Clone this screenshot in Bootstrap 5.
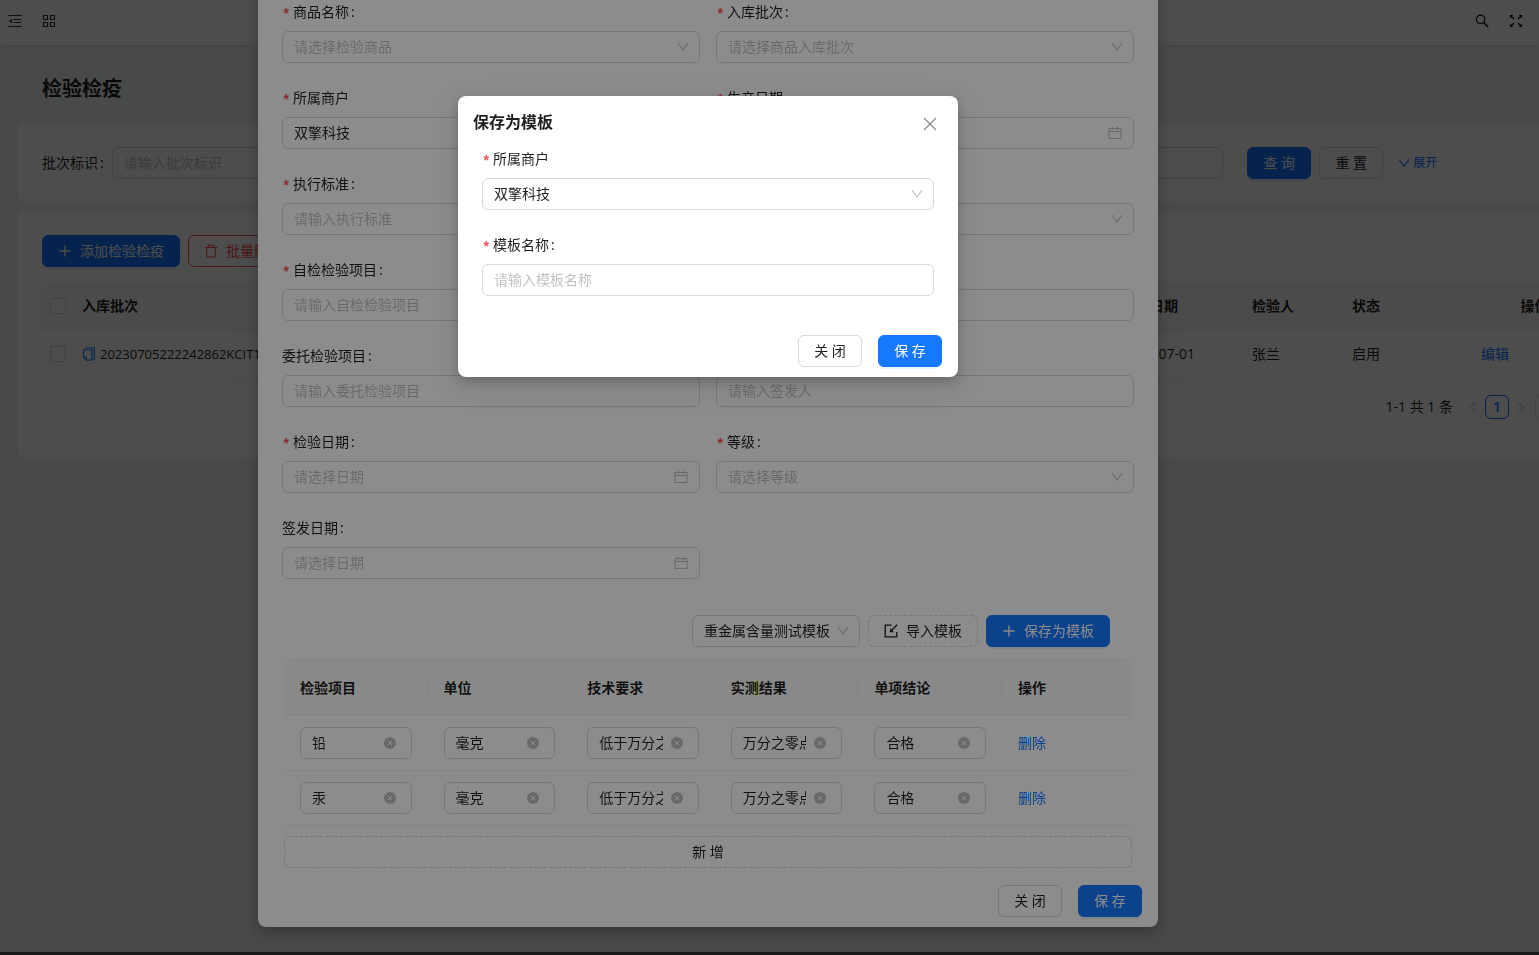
<!DOCTYPE html>
<html lang="zh-CN">
<head>
<meta charset="utf-8">
<meta name="viewport" content="width=device-width, initial-scale=1">
<title>检验检疫</title>
<link rel="stylesheet" href="https://cdn.jsdelivr.net/npm/bootstrap@5.3.0/dist/css/bootstrap.min.css">
<style>
  :root { --line: #d9d9d9; --split: #f0f0f0; --brand: #1677ff; --danger: #ff4d4f; --ink: rgba(0,0,0,.88); --hint: rgba(0,0,0,.25); }
  html, body { height: 100%; overflow: hidden; }
  body { background: #f0f2f5; color: var(--ink); font: 14px/22px "Open Sans", "Noto Sans CJK SC", sans-serif; }
  a { color: var(--brand); text-decoration: none; }
  svg { display: block; flex: none; }

  /* controls */
  .form-control, .form-select { height: 32px; padding: 4px 11px; border: 1px solid var(--line); border-radius: 6px; font-size: 14px; line-height: 22px; color: var(--ink); background-color: #fff; }
  .form-control { padding-top: 3px; padding-bottom: 5px; }
  .form-control::placeholder { color: var(--hint); opacity: 1; }
  .form-select { padding-right: 28px; background-size: 12px 12px; background-position: right 10px center;
    background-image: url("data:image/svg+xml,%3Csvg xmlns='http://www.w3.org/2000/svg' viewBox='0 0 12 12'%3E%3Cpath d='M1.2 2.2L6 9l4.8-6.8' fill='none' stroke='%23bfbfbf' stroke-width='1.1'/%3E%3C/svg%3E"); }
  .form-select.unset { color: var(--hint); }
  .date-input { background: #fff url("data:image/svg+xml,%3Csvg xmlns='http://www.w3.org/2000/svg' viewBox='0 0 14 14'%3E%3Cpath d='M1 2.5h12v10H1zM1 5.5h12M4.5 .8v3M9.5 .8v3' fill='none' stroke='%23bfbfbf'/%3E%3C/svg%3E") no-repeat right 11px center / 14px 14px; }
  .clear-input { padding-right: 35px; background: #fff url("data:image/svg+xml,%3Csvg xmlns='http://www.w3.org/2000/svg' viewBox='0 0 12 12'%3E%3Ccircle cx='6' cy='6' r='6' fill='%23bfbfbf'/%3E%3Cpath d='M4 4l4 4M8 4l-4 4' stroke='%23fff'/%3E%3C/svg%3E") no-repeat right 15px center / 12px 12px; }
  .form-label { display: flex; height: 22px; margin: 0 0 8px; }
  .form-label.need::before { content: "*"; width: 11px; padding-top: 3px; color: var(--danger); font-family: "Liberation Mono", monospace; font-weight: 700; }
  .form-label.colon::after, .bar-label::after { content: ":"; margin-left: 2px; }
  .btn { display: inline-flex; align-items: center; justify-content: center; gap: 8px; height: 32px; min-width: 64px; padding: 4px 15px; border-radius: 6px; font-size: 14px; line-height: 22px; white-space: nowrap; }
  .btn-primary { background: var(--brand); border-color: var(--brand); box-shadow: 0 2px 0 rgba(5,145,255,.1); }
  .btn-plain { background: #fff; border-color: var(--line); color: var(--ink); }
  .btn-dashed { background: #fff; border: 1px dashed var(--line); color: var(--ink); }
  .btn-outline-danger { color: var(--danger); border-color: var(--danger); }
  .form-grid { display: grid; grid-template-columns: 1fr 1fr; column-gap: 16px; }
  .field { margin-bottom: 24px; }

  /* page behind the dialogs */
  .topbar { height: 45px; padding: 0 16px 3px 8px; background: #fff; box-shadow: 0 1px 4px rgba(0,21,41,.08); }
  .topbar nav { gap: 20px; }
  .topbar a { color: #333; }
  .topbar .tool-icons a { color: #000; }
  .wide { margin-right: -110px; padding-left: 18px; }
  .page-title { margin: 0; padding: 30px 24px 20px; font-size: 20px; line-height: 28px; font-weight: 600; }
  .panel { padding: 24px; margin-bottom: 8px; border-radius: 8px; background: #fff; }
  .grid-table { width: 100%; table-layout: fixed; border-collapse: separate; border-spacing: 0; }
  .grid-table th, .grid-table td { border-bottom: 1px solid var(--split); }
  .grid-table th { position: relative; background: #fafafa; font-weight: 600; }
  .grid-table th:first-child { border-top-left-radius: 8px; }
  .grid-table th:last-child { border-top-right-radius: 8px; }
  .grid-table th.split::after { content: ""; position: absolute; right: 0; top: 50%; height: 22px; margin-top: -11px; border-right: 1px solid var(--split); }
  .list-table th { padding: 12px 8px; }
  .list-table td { height: 49px; padding: 12px 8px; }
  .list-table .form-check-input { display: block; width: 16px; height: 16px; margin: 0; border: 1px solid var(--line); border-radius: 3px; }
  .col-check { width: 32px; }
  .col-date { width: 130px; }
  .col-short { width: 100px; }
  .col-ops { width: 181px; }
  .col-last { width: 130px; }
  .serial { font-size: 13px; }
  .ops { padding-left: 29px; gap: 16px; }
  .divide { width: 1px; height: 13px; background: var(--split); }
  .pager { margin: 16px 0; height: 24px; }
  .pager a { display: flex; align-items: center; justify-content: center; width: 24px; height: 24px; border-radius: 6px; }
  .pager .current { border: 1px solid var(--brand); font-weight: 600; }
  .pager .form-select { width: 90px; height: 24px; padding: 0 7px; margin-left: 2px; }
  .fold { font-size: 12px; gap: 3px; margin-left: 7px; }

  /* dialogs */
  .modal-backdrop.show { opacity: .45; }
  .modal { padding-right: 123px; overflow: hidden; }
  .modal-dialog { width: 100%; }
  .modal-content { border: 0; border-radius: 8px; color: var(--ink); box-shadow: 0 6px 16px rgba(0,0,0,.08), 0 3px 6px -4px rgba(0,0,0,.12), 0 9px 28px 8px rgba(0,0,0,.05), 0 4px 12px rgba(0,0,0,.15); }
  .modal-footer { padding: 10px 16px; gap: 16px; border: 0; }
  .modal-footer > * { margin: 0; }
  .sheet { padding-bottom: 28px; }
  .sheet .modal-dialog { max-width: 900px; margin: 0 auto; flex: none; }
  .sheet .modal-body { padding: 24px 24px 7px; }
  .tools { padding: 12px 24px 12px 0; border-bottom: 1px solid var(--split); }
  .tools .form-select { width: 168px; }
  .item-area { padding: 0 2px; }
  .item-area .btn { margin-top: 10px; }
  .item-table th { padding: 16px; height: 56px; }
  .item-table td { padding: 11px 16px; }
  .backdrop-top { z-index: 1060; }
  .prompt { z-index: 1065; }
  .prompt .modal-dialog { max-width: 500px; margin: 96px auto 0; }
  .prompt .modal-header { padding: 14px 21px 14px 15px; border: 0; }
  .prompt .modal-title { font-size: 16px; line-height: 24px; font-weight: 600; }
  .prompt .modal-body { padding: 0 24px; }
  .prompt .modal-footer { padding-top: 15px; }
  .x-close { padding: 4px 0 0; border: 0; background: none; color: rgba(0,0,0,.45); }
  .desk-edge { height: 3px; z-index: 1070; background: #1b1b1b; }
</style>
</head>
<body>
<header class="topbar d-flex align-items-center justify-content-between">
  <nav class="d-flex">
    <a href="#" aria-label="折叠菜单"><svg width="14" height="14" viewBox="0 0 14 14" fill="none" stroke="currentColor" stroke-width="1.2"><path d="M.5 1.500h13M5.500 5.500h8M5.500 8.500h8M.5 12.500h13"/><path d="M4 4.800v4.400L1 7z" fill="currentColor" stroke="none"/></svg></a>
    <a href="#" aria-label="应用"><svg width="14" height="14" viewBox="0 0 14 14" fill="none" stroke="currentColor" stroke-width="1.2"><path d="M1.500 1.500h4v4h-4zM8.500 1.500h4v4h-4zM1.500 8.500h4v4h-4zM8.500 8.500h4v4h-4z"/></svg></a>
  </nav>
  <nav class="tool-icons d-flex">
    <a href="#" aria-label="搜索"><svg width="14" height="14" viewBox="0 0 14 14" fill="none" stroke="currentColor" stroke-width="1.1"><circle cx="5.600" cy="5.300" r="4.200"/><path d="M8.700 8.400l4.500 4.500" stroke-width="1.400"/></svg></a>
    <a href="#" aria-label="全屏"><svg width="14" height="14" viewBox="0 0 14 14" fill="none" stroke="currentColor" stroke-width="1.1"><path d="M1.500 1.500L5 5M12.500 1.500L9 5M1.500 12.500L5 9M12.500 12.500L9 9"/><path d="M1 1h3.200L1 4.200zM13 1v3.200L9.800 1zM1 13V9.800L4.200 13zM13 13H9.800L13 9.800z" fill="currentColor" stroke="none"/></svg></a>
  </nav>
</header>

<main class="wide">
  <h1 class="page-title">检验检疫</h1>
  <section class="panel">
    <form class="row g-4">
      <div class="col-9 d-flex gap-4">
        <div class="d-flex align-items-center flex-fill gap-2">
          <label class="bar-label text-nowrap" for="batch">批次标识</label>
          <input id="batch" class="form-control" placeholder="请输入批次标识">
        </div>
        <div class="flex-fill"><input class="form-control" aria-label="查询条件"></div>
      </div>
      <div class="col-3 d-flex align-items-center gap-2">
        <button type="button" class="btn btn-primary">查 询</button>
        <button type="button" class="btn btn-plain">重 置</button>
        <a href="#" class="fold d-flex align-items-center"><svg width="12" height="12" viewBox="0 0 12 12" fill="none" stroke="currentColor" stroke-width="1.1"><path d="M1.2 2.600L6 9.200l4.800-6.600"/></svg>展开</a>
      </div>
    </form>
  </section>

  <section class="panel">
    <div class="d-flex gap-2 mb-3">
      <button type="button" class="btn btn-primary"><svg width="14" height="14" viewBox="0 0 14 14" stroke="currentColor" stroke-width="1.3"><path d="M7 1.500v11M1.500 7h11"/></svg>添加检验检疫</button>
      <button type="button" class="btn btn-outline-danger"><svg width="14" height="14" viewBox="0 0 14 14" fill="none" stroke="currentColor" stroke-width="1.1"><path d="M.8 3.500h12.400M4.500 3.300V1.200h5v2.100M2.500 3.500l.5 9.500h8l.5-9.500"/></svg>批量删除</button>
    </div>
    <table class="grid-table list-table">
      <colgroup><col class="col-check"><col><col class="col-date"><col class="col-short"><col class="col-short"><col class="col-ops"></colgroup>
      <thead><tr>
        <th><input type="checkbox" class="form-check-input" aria-label="全选"></th>
        <th class="split">入库批次</th><th class="split">检验日期</th><th class="split">检验人</th><th class="split">状态</th><th class="text-center">操作</th>
      </tr></thead>
      <tbody><tr>
        <td><input type="checkbox" class="form-check-input" aria-label="选择"></td>
        <td><div class="d-flex align-items-center gap-1"><svg width="14" height="14" viewBox="0 0 14 14" fill="none" stroke="#1890ff" stroke-width="1.1"><path d="M1.600 2.800h8.200v10.300H4.200L1.600 10.600z"/><path d="M10 2.800h2.500v10H10z" fill="#1890ff" fill-opacity=".35" stroke="none"/><path d="M3.500.7h9v12M1.800 10.300h2.600v2.600"/></svg><span class="serial">20230705222242862KCIT1</span></div></td>
        <td>2023-07-01</td><td>张兰</td><td>启用</td>
        <td><div class="ops d-flex align-items-center"><a href="#">编辑</a><span class="divide"></span></div></td>
      </tr></tbody>
    </table>
    <nav class="pager d-flex align-items-center justify-content-end">
      <span class="me-2">1-1 共 1 条</span>
      <a href="#" aria-label="上一页"><svg width="12" height="12" viewBox="0 0 12 12" fill="none" stroke="#bfbfbf"><path d="M9 1.500L3 6.500l6 4.500"/></svg></a>
      <a href="#" class="current">1</a>
      <a href="#" aria-label="下一页"><svg width="12" height="12" viewBox="0 0 12 12" fill="none" stroke="#bfbfbf"><path d="M3 1.500l6 5L3 11"/></svg></a>
      <select class="form-select" aria-label="每页条数"></select>
    </nav>
  </section>
</main>

<div class="modal-backdrop show"></div>
<div class="modal sheet d-flex flex-column justify-content-end" role="dialog">
  <div class="modal-dialog">
    <div class="modal-content">
      <div class="modal-body">
        <form class="form-grid">
          <div class="field"><label class="form-label need colon" for="f1">商品名称</label><select id="f1" class="form-select unset"><option>请选择检验商品</option></select></div>
          <div class="field"><label class="form-label need colon" for="f2">入库批次</label><select id="f2" class="form-select unset"><option>请选择商品入库批次</option></select></div>
          <div class="field"><label class="form-label need" for="f3">所属商户</label><input id="f3" class="form-control" value="双擎科技"></div>
          <div class="field"><label class="form-label need" for="f4">生产日期</label><input id="f4" class="form-control date-input"></div>
          <div class="field"><label class="form-label need colon" for="f5">执行标准</label><input id="f5" class="form-control" placeholder="请输入执行标准"></div>
          <div class="field"><label class="form-label" for="f6"></label><select id="f6" class="form-select"></select></div>
          <div class="field"><label class="form-label need colon" for="f7">自检检验项目</label><input id="f7" class="form-control" placeholder="请输入自检检验项目"></div>
          <div class="field"><label class="form-label" for="f8"></label><input id="f8" class="form-control"></div>
          <div class="field"><label class="form-label colon" for="f9">委托检验项目</label><input id="f9" class="form-control" placeholder="请输入委托检验项目"></div>
          <div class="field"><label class="form-label" for="f10"></label><input id="f10" class="form-control" placeholder="请输入签发人"></div>
          <div class="field"><label class="form-label need colon" for="f11">检验日期</label><input id="f11" class="form-control date-input" placeholder="请选择日期"></div>
          <div class="field"><label class="form-label need colon" for="f12">等级</label><select id="f12" class="form-select unset"><option>请选择等级</option></select></div>
          <div class="field"><label class="form-label colon" for="f13">签发日期</label><input id="f13" class="form-control date-input" placeholder="请选择日期"></div>
        </form>
        <div class="tools d-flex justify-content-end gap-2">
          <select class="form-select" aria-label="模板"><option>重金属含量测试模板</option></select>
          <button type="button" class="btn btn-dashed"><svg width="14" height="14" viewBox="0 0 14 14" fill="none" stroke="currentColor" stroke-width="1.3"><path d="M7.500 1.200H1.200v11.600h11.600V8"/><path d="M13.200.8L7.500 6.500"/><path d="M6 4.200v4h4z" fill="currentColor" stroke="none"/></svg>导入模板</button>
          <button type="button" class="btn btn-primary"><svg width="14" height="14" viewBox="0 0 14 14" stroke="currentColor" stroke-width="1.3"><path d="M7 1.500v11M1.500 7h11"/></svg>保存为模板</button>
        </div>
        <div class="item-area">
          <table class="grid-table item-table">
            <colgroup><col><col><col><col><col><col class="col-last"></colgroup>
            <thead><tr><th class="split">检验项目</th><th class="split">单位</th><th class="split">技术要求</th><th class="split">实测结果</th><th class="split">单项结论</th><th>操作</th></tr></thead>
            <tbody>
              <tr>
                <td><input class="form-control clear-input" aria-label="检验项目" value="铅"></td>
                <td><input class="form-control clear-input" aria-label="单位" value="毫克"></td>
                <td><input class="form-control clear-input" aria-label="技术要求" value="低于万分之"></td>
                <td><input class="form-control clear-input" aria-label="实测结果" value="万分之零点"></td>
                <td><input class="form-control clear-input" aria-label="单项结论" value="合格"></td>
                <td><a href="#">删除</a></td>
              </tr>
              <tr>
                <td><input class="form-control clear-input" aria-label="检验项目" value="汞"></td>
                <td><input class="form-control clear-input" aria-label="单位" value="毫克"></td>
                <td><input class="form-control clear-input" aria-label="技术要求" value="低于万分之"></td>
                <td><input class="form-control clear-input" aria-label="实测结果" value="万分之零点"></td>
                <td><input class="form-control clear-input" aria-label="单项结论" value="合格"></td>
                <td><a href="#">删除</a></td>
              </tr>
            </tbody>
          </table>
          <button type="button" class="btn btn-dashed w-100">新 增</button>
        </div>
      </div>
      <div class="modal-footer">
        <button type="button" class="btn btn-plain">关 闭</button>
        <button type="button" class="btn btn-primary">保 存</button>
      </div>
    </div>
  </div>
</div>

<div class="modal-backdrop backdrop-top show"></div>
<div class="modal prompt d-block" role="dialog" aria-labelledby="promptTitle">
  <div class="modal-dialog">
    <div class="modal-content">
      <div class="modal-header">
        <h2 class="modal-title" id="promptTitle">保存为模板</h2>
        <button type="button" class="x-close" aria-label="关闭"><svg width="14" height="14" viewBox="0 0 14 14" fill="none" stroke="currentColor" stroke-width="1.4"><path d="M1 1l12 12M13 1L1 13"/></svg></button>
      </div>
      <form class="modal-body">
        <div class="field"><label class="form-label need" for="m1">所属商户</label><select id="m1" class="form-select"><option>双擎科技</option></select></div>
        <div class="field"><label class="form-label need colon" for="m2">模板名称</label><input id="m2" class="form-control" placeholder="请输入模板名称"></div>
      </form>
      <div class="modal-footer">
        <button type="button" class="btn btn-plain">关 闭</button>
        <button type="button" class="btn btn-primary">保 存</button>
      </div>
    </div>
  </div>
</div>

<div class="desk-edge fixed-bottom"></div>
<script src="https://cdn.jsdelivr.net/npm/bootstrap@5.3.0/dist/js/bootstrap.bundle.min.js"></script>
</body>
</html>
